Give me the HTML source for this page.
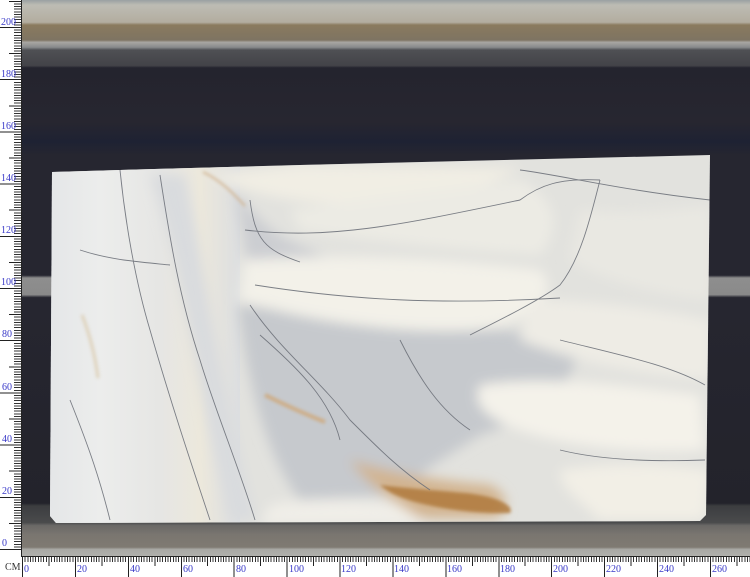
<!DOCTYPE html>
<html><head><meta charset="utf-8"><style>
html,body{margin:0;padding:0}
body{width:750px;height:577px;position:relative;overflow:hidden;background:#fff;font-family:"Liberation Serif",serif}
.a{position:absolute}
.lab{position:absolute;color:#3838c8;font-size:10px;line-height:10px}
</style></head><body>
<svg class="a" style="left:0;top:0" width="750" height="577" viewBox="0 0 750 577">
<defs>
<linearGradient id="bg" gradientUnits="userSpaceOnUse" x1="0" y1="0" x2="0" y2="556">
<stop offset="0" stop-color="#9aa0a2"/>
<stop offset="0.009" stop-color="#bdbcb4"/>
<stop offset="0.04" stop-color="#b3ad9f"/>
<stop offset="0.045" stop-color="#8a7a5e"/>
<stop offset="0.072" stop-color="#7e7462"/>
<stop offset="0.076" stop-color="#a8a6a2"/>
<stop offset="0.085" stop-color="#888a8c"/>
<stop offset="0.09" stop-color="#4f5054"/>
<stop offset="0.118" stop-color="#434348"/>
<stop offset="0.122" stop-color="#24242e"/>
<stop offset="0.22" stop-color="#272630"/>
<stop offset="0.255" stop-color="#1e2233"/>
<stop offset="0.28" stop-color="#262630"/>
<stop offset="0.495" stop-color="#262630"/>
<stop offset="0.5" stop-color="#8e8e8e"/>
<stop offset="0.53" stop-color="#8a8a8a"/>
<stop offset="0.535" stop-color="#262630"/>
<stop offset="0.905" stop-color="#23232b"/>
<stop offset="0.91" stop-color="#3c3d40"/>
<stop offset="0.94" stop-color="#4a4b4c"/>
<stop offset="0.945" stop-color="#6a6866"/>
<stop offset="0.962" stop-color="#7a7670"/>
<stop offset="0.984" stop-color="#7f7a72"/>
<stop offset="0.988" stop-color="#a8a8a4"/>
<stop offset="1" stop-color="#b0b0ac"/>
</linearGradient>
<clipPath id="slab"><path d="M52 172 L120 170 L300 165 L710 155 L706 515 L700 521 L56 523 L50 516 Z"/></clipPath>
<linearGradient id="lft" x1="0" y1="0" x2="1" y2="0">
<stop offset="0" stop-color="#e3e5e7"/>
<stop offset="0.3" stop-color="#ecedec"/>
<stop offset="0.6" stop-color="#e6e6e4"/>
<stop offset="0.8" stop-color="#ece8dc"/>
<stop offset="1" stop-color="#dcdee0"/>
</linearGradient>
<filter id="bl"><feGaussianBlur stdDeviation="6"/></filter>
<filter id="bl2"><feGaussianBlur stdDeviation="1.5"/></filter>
</defs>
<rect x="21" y="0" width="729" height="556" fill="url(#bg)"/>
<g clip-path="url(#slab)">
<rect x="40" y="150" width="680" height="380" fill="#e2e2de"/>
<rect x="40" y="150" width="200" height="380" fill="url(#lft)"/>
<g filter="url(#bl)">
<path d="M150 175 C180 260 190 350 230 520 L255 520 C220 380 205 270 185 175Z" fill="#d9dbde"/>
<path d="M240 305 C320 315 420 325 560 335 C600 350 560 410 480 435 C450 455 420 470 400 495 L300 500 C270 460 250 400 238 305Z" fill="#c6c9cd"/>
<path d="M235 190 C280 250 300 240 330 260 L300 300 L250 280 Z" fill="#ccced2"/>
<path d="M210 175 C260 200 330 210 420 200 C480 190 510 175 520 168 L300 165Z" fill="#f1eee4"/>
<path d="M245 260 C320 255 420 255 540 270 C560 290 540 320 480 330 C400 335 300 320 240 300Z" fill="#f3f1e9"/>
<path d="M290 210 C360 200 440 190 520 180 C560 200 560 230 540 255 C460 250 360 240 300 230Z" fill="#ecebe4"/>
<path d="M480 385 C540 375 620 385 700 395 L705 450 C640 455 560 445 520 430 C490 420 470 405 480 385Z" fill="#f4f2ea"/>
<path d="M530 300 C590 300 660 310 710 320 L710 380 C640 375 570 360 520 340Z" fill="#eeece5"/>
<path d="M580 210 C630 215 680 210 710 205 L710 300 C660 295 600 280 570 260Z" fill="#e9e8e2"/>
<path d="M560 470 C620 460 680 465 710 470 L705 520 L600 520 C580 500 560 490 560 470Z" fill="#f2efe6"/>
<path d="M270 505 C320 495 380 500 430 510 L420 525 L260 525Z" fill="#f0eee8"/>
<path d="M350 460 C390 472 430 480 490 485 C510 495 510 512 495 518 L420 518 C390 500 365 482 350 460Z" fill="#d2b490"/>
</g>
<g filter="url(#bl2)" opacity="0.85">
<path d="M380 485 C405 488 430 490 465 493 C495 496 515 505 510 513 C480 514 445 510 415 502 C398 497 388 492 380 485Z" fill="#b07a3c"/>
<path d="M265 395 C285 405 300 412 325 422" stroke="#cfa87a" stroke-width="4" fill="none"/>
<path d="M203 172 C220 180 232 192 245 206" stroke="#cfae88" stroke-width="2" fill="none"/>
<path d="M82 315 C90 335 95 355 98 378" stroke="#dccdb2" stroke-width="3" fill="none"/>
</g>
<g fill="none" stroke="#6e727a" stroke-width="0.9" opacity="0.9">
<path d="M120 170 C125 220 135 280 150 330 C170 400 190 460 210 520"/>
<path d="M160 175 C170 240 180 300 200 360 C215 410 240 470 255 520"/>
<path d="M250 200 C255 240 265 250 300 262"/>
<path d="M250 305 C280 350 320 380 350 420 C380 450 400 470 430 490"/>
<path d="M245 230 C330 240 400 225 520 200 C540 185 560 178 600 180"/>
<path d="M600 180 C590 220 580 260 560 285 C540 300 500 320 470 335"/>
<path d="M255 285 C350 300 440 305 560 298"/>
<path d="M400 340 C420 380 440 410 470 430"/>
<path d="M260 335 C300 370 330 400 340 440"/>
<path d="M560 340 C620 355 670 365 705 385"/>
<path d="M520 170 C560 175 620 190 710 200"/>
<path d="M560 450 C600 460 650 462 705 460"/>
<path d="M80 250 C110 260 140 262 170 265"/>
<path d="M70 400 C90 450 100 480 110 520"/>
</g>
</g>
<rect x="0" y="0" width="21" height="556" fill="#fff"/>
<rect x="21" y="0" width="1" height="556" fill="#222"/>
<rect x="0" y="556" width="750" height="21" fill="#fff"/>
<rect x="21" y="556" width="729" height="1" fill="#222"/>
</svg>
<div class="a" style="left:14px;top:0;width:7px;height:550px;background:repeating-linear-gradient(to top,#333 0 1px,transparent 1px 2.61px)"></div>
<div class="a" style="left:9px;top:0;width:12px;height:550px;background:repeating-linear-gradient(to top,#222 0 1px,transparent 1px 26.1px)"></div>
<div class="a" style="left:0;top:0;width:21px;height:550px;background:repeating-linear-gradient(to top,#222 0 1px,transparent 1px 52.2px)"></div>
<div class="a" style="left:22px;top:557px;width:728px;height:5px;background:repeating-linear-gradient(to right,#333 0 1px,transparent 1px 2.646px)"></div>
<div class="a" style="left:22px;top:557px;width:728px;height:9px;background:repeating-linear-gradient(to right,#222 0 1px,transparent 1px 26.46px)"></div>
<div class="a" style="left:22px;top:557px;width:728px;height:20px;background:repeating-linear-gradient(to right,#222 0 1px,transparent 1px 52.92px)"></div>
<div class="lab" style="left:2px;top:539px">0</div>
<div class="lab" style="left:2px;top:487px">20</div>
<div class="lab" style="left:2px;top:435px">40</div>
<div class="lab" style="left:2px;top:383px">60</div>
<div class="lab" style="left:2px;top:330px">80</div>
<div class="lab" style="left:1px;top:278px">100</div>
<div class="lab" style="left:1px;top:226px">120</div>
<div class="lab" style="left:1px;top:174px">140</div>
<div class="lab" style="left:1px;top:122px">160</div>
<div class="lab" style="left:1px;top:70px">180</div>
<div class="lab" style="left:1px;top:18px">200</div>
<div class="lab" style="left:5px;top:563px;color:#333">CM</div>
<div class="lab" style="left:24px;top:565px">0</div>
<div class="lab" style="left:77px;top:565px">20</div>
<div class="lab" style="left:130px;top:565px">40</div>
<div class="lab" style="left:183px;top:565px">60</div>
<div class="lab" style="left:236px;top:565px">80</div>
<div class="lab" style="left:289px;top:565px">100</div>
<div class="lab" style="left:341px;top:565px">120</div>
<div class="lab" style="left:394px;top:565px">140</div>
<div class="lab" style="left:447px;top:565px">160</div>
<div class="lab" style="left:500px;top:565px">180</div>
<div class="lab" style="left:553px;top:565px">200</div>
<div class="lab" style="left:606px;top:565px">220</div>
<div class="lab" style="left:659px;top:565px">240</div>
<div class="lab" style="left:712px;top:565px">260</div>
</body></html>
